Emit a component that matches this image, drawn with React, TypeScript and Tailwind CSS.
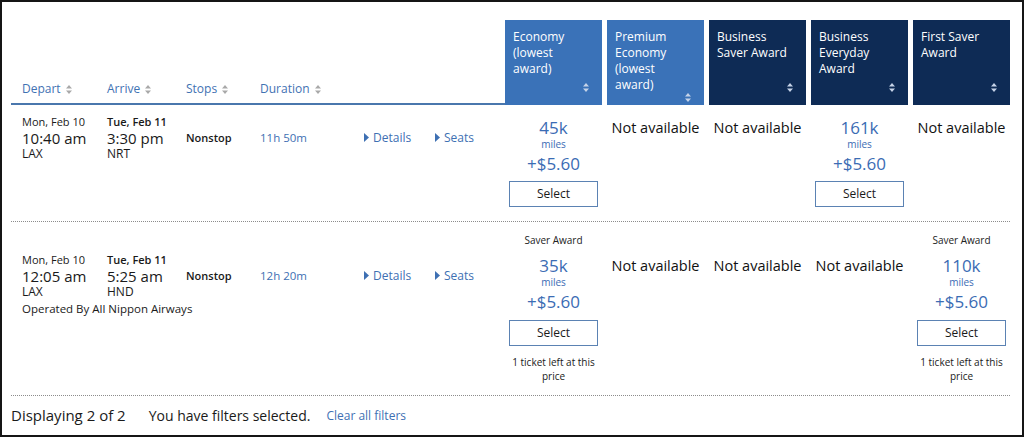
const font = { fontFamily: '"Open Sans", "Liberation Sans", sans-serif' };

type Fare = {
  miles: string;
  saver?: boolean;
  lastTicket?: boolean;
} | null;

const headers = [
  { label: ['Economy', '(lowest', 'award)'], dark: false },
  { label: ['Premium', 'Economy', '(lowest', 'award)'], dark: false },
  { label: ['Business', 'Saver Award'], dark: true },
  { label: ['Business', 'Everyday', 'Award'], dark: true },
  { label: ['First Saver', 'Award'], dark: true },
];

const flights = [
  {
    depDate: 'Mon, Feb 10',
    depTime: '10:40 am',
    from: 'LAX',
    arrDate: 'Tue, Feb 11',
    arrTime: '3:30 pm',
    to: 'NRT',
    duration: '11h 50m',
    operator: null as string | null,
    labelRow: false,
    fares: [{ miles: '45k' }, null, null, { miles: '161k' }, null] as Fare[],
  },
  {
    depDate: 'Mon, Feb 10',
    depTime: '12:05 am',
    from: 'LAX',
    arrDate: 'Tue, Feb 11',
    arrTime: '5:25 am',
    to: 'HND',
    duration: '12h 20m',
    operator: 'Operated By All Nippon Airways',
    labelRow: true,
    fares: [
      { miles: '35k', saver: true, lastTicket: true },
      null,
      null,
      null,
      { miles: '110k', saver: true, lastTicket: true },
    ] as Fare[],
  },
];

function SortIcon({ light }: { light?: boolean }) {
  return (
    <svg width="6" height="9" viewBox="0 0 6 9" className="shrink-0">
      <path d="M3 0 L6 3.5 H0 Z M0 5.5 H6 L3 9 Z" fill={light ? '#c5d3e8' : '#a9a9a9'} />
    </svg>
  );
}

function Caret() {
  return (
    <svg width="5" height="9" viewBox="0 0 5 9" className="shrink-0">
      <path d="M0 0 L5 4.5 L0 9 Z" fill="#3e70b3" />
    </svg>
  );
}

function FareCell({ fare, labelRow }: { fare: Fare; labelRow: boolean }) {
  return (
    <div
      className={`w-[97px] flex flex-col items-center px-[4px] text-center ${
        labelRow ? 'pt-[11px] pb-[12px]' : 'pt-[13px] pb-[14px]'
      }`}
    >
      {labelRow && (
        <div className="h-[14px] mb-[9px] text-[10px] leading-[14px] text-[#222]">
          {fare?.saver ? 'Saver Award' : ''}
        </div>
      )}
      {fare ? (
        <>
          <div className="text-[17px] leading-[20px] text-[#3b6cb4]">{fare.miles}</div>
          <div className="text-[10px] leading-[12px] text-[#3b6cb4]">miles</div>
          <div className="mt-[4px] text-[17px] leading-[20px] text-[#3b6cb4]">+$5.60</div>
          <button
            className={`${labelRow ? 'mt-[8px]' : 'mt-[7px]'} w-[89px] h-[26px] border border-[#5b82b3] bg-white text-[12px] text-[#1a1a1a]`}
          >
            Select
          </button>
          {fare.lastTicket && (
            <div className="mt-[9px] text-[10px] leading-[14px] text-[#1a1a1a]">
              1 ticket left at this price
            </div>
          )}
        </>
      ) : (
        <div className="whitespace-nowrap text-[14.5px] leading-[20px] text-[#111]">Not available</div>
      )}
    </div>
  );
}

export default function App() {
  return (
    <div
      className="w-[1024px] h-[437px] border-2 border-[#151515] bg-white pl-[9px] pt-[18px] flex flex-col"
      style={font}
    >
      {/* column headers */}
      <div className="flex">
        <div className="w-[494px] h-[85px] border-b-2 border-[#4a77ad] pl-[11px] grid grid-cols-[85px_79px_74px_104px] items-end pb-[6px]">
          {['Depart', 'Arrive', 'Stops', 'Duration'].map((h) => (
            <div key={h} className="flex items-center gap-[5px] text-[12px] leading-[16px] text-[#3f72b3]">
              {h}
              <SortIcon />
            </div>
          ))}
        </div>
        <div className="flex gap-[5px]">
          {headers.map((h, i) => (
            <div
              key={i}
              className={`w-[97px] h-[85px] flex flex-col justify-between pl-[8px] pr-[13px] pt-[9px] pb-[13px] text-white text-[12px] leading-[16px] ${
                h.dark ? 'bg-[#0e2b55]' : 'bg-[#3a72b8]'
              }`}
            >
              <div>
                {h.label.map((l) => (
                  <div key={l}>{l}</div>
                ))}
              </div>
              <div className="self-end">
                <SortIcon light />
              </div>
            </div>
          ))}
        </div>
      </div>

      {/* flight rows */}
      {flights.map((f, idx) => (
        <div key={idx} className="flex w-[999px] border-b border-dotted border-[#8c8c8c]">
          <div className={`w-[494px] pl-[11px] ${f.labelRow ? 'pt-[31px]' : 'pt-[10px]'} text-[#1a1a1a]`}>
            <div className="grid grid-cols-[85px_79px_74px_104px_71px_70px]">
              <div className="flex flex-col">
                <span className="text-[11px] leading-[14px]">{f.depDate}</span>
                <span className="text-[15px] leading-[18px]">{f.depTime}</span>
                <span className="text-[12px] leading-[14px]">{f.from}</span>
              </div>
              <div className="flex flex-col">
                <span className="text-[11px] leading-[14px] font-semibold">{f.arrDate}</span>
                <span className="text-[15px] leading-[18px]">{f.arrTime}</span>
                <span className="text-[12px] leading-[14px]">{f.to}</span>
              </div>
              <div className="pt-[14px] text-[11px] leading-[17px] font-semibold">Nonstop</div>
              <div className="pt-[14px] text-[11.5px] leading-[17px] text-[#3e70b3]">{f.duration}</div>
              <div className="pt-[14px] flex items-center gap-[4px] h-[31px] text-[12px] text-[#3e70b3]">
                <Caret />
                Details
              </div>
              <div className="pt-[14px] flex items-center gap-[4px] h-[31px] text-[12px] text-[#3e70b3]">
                <Caret />
                Seats
              </div>
            </div>
            {f.operator && <div className="text-[11.5px] leading-[19px]">{f.operator}</div>}
          </div>
          <div className="flex gap-[5px]">
            {f.fares.map((fare, i) => (
              <FareCell key={i} fare={fare} labelRow={f.labelRow} />
            ))}
          </div>
        </div>
      ))}

      {/* footer */}
      <div className="h-[39px] flex items-center text-[#1a1a1a]">
        <span className="text-[15px]">Displaying 2 of 2</span>
        <span className="ml-[23px] text-[14px]">You have filters selected.</span>
        <span className="ml-[16px] text-[12px] text-[#3e70b3]">Clear all filters</span>
      </div>
    </div>
  );
}
